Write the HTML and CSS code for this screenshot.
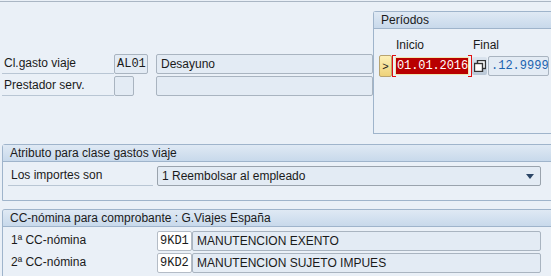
FILE: index.html
```html
<!DOCTYPE html>
<html lang="es">
<head>
  <meta charset="UTF-8">
  <title>Clase gasto viaje</title>
  <link rel="stylesheet" href="styles.css">
</head>
<body>
  <div class="topline"></div>
  <div class="top">
    <div class="left">
      <div class="row">
        <span class="label">Cl.gasto viaje</span>
        <span class="cell"><span class="field code mono">AL01</span></span>
        <span class="field text">Desayuno</span>
      </div>
      <div class="row">
        <span class="label">Prestador serv.</span>
        <span class="cell"><span class="field small"></span></span>
        <span class="field text"></span>
      </div>
    </div>
    <div class="periods">
      <div class="head">Períodos</div>
      <div class="period-body">
        <div class="cols">
          <span class="col-inicio">Inicio</span>
          <span>Final</span>
        </div>
        <div class="period-row">
          <span class="btn-more">&gt;</span>
          <span class="err">
            <span class="err-field mono">01.01.2016</span>
          </span>
          <span class="btn-copy">
            <svg width="12" height="12" viewBox="0 0 12 12">
              <rect x="3.5" y="0.5" width="8" height="8" fill="#fff" stroke="#333" stroke-width="1.4"/>
              <rect x="0.5" y="3.5" width="8" height="8" fill="#fff" stroke="#333" stroke-width="1.4"/>
            </svg>
          </span>
          <span class="field final mono">.12.9999</span>
        </div>
      </div>
    </div>
  </div>

  <div class="group g1">
    <div class="head">Atributo para clase gastos viaje</div>
    <div class="group-body">
      <div class="row">
        <span class="label wide">Los importes son</span>
        <span class="field select">1 Reembolsar al empleado<span class="arrow"></span></span>
      </div>
    </div>
  </div>

  <div class="group g2">
    <div class="head">CC-nómina para comprobante : G.Viajes España</div>
    <div class="group-body">
      <div class="row">
        <span class="label wide plain">1ª CC-nómina</span>
        <span class="field input mono">9KD1</span>
        <span class="field long">MANUTENCION EXENTO</span>
      </div>
      <div class="row">
        <span class="label wide plain">2ª CC-nómina</span>
        <span class="field input mono">9KD2</span>
        <span class="field long">MANUTENCION SUJETO IMPUES</span>
      </div>
    </div>
  </div>
</body>
</html>
```

FILE: styles.css
```css
body {
  margin: 0;
  background: #eaf0f7;
  font-family: "Liberation Sans", Arial, sans-serif;
  font-size: 12px;
  color: #1a1a1a;
  overflow: hidden;
  height: 276px;
}

.mono {
  font-family: "Liberation Mono", "Courier New", monospace;
}

.topline {
  height: 1px;
  margin-top: 1px;
  background: #aab6c4;
}

.top {
  display: flex;
  height: 132px;
}

.left {
  width: 372px;
  padding-top: 52px;
  padding-left: 2px;
}

.row {
  display: flex;
  height: 20px;
  margin-bottom: 2px;
}

.label {
  width: 110px;
  padding-left: 2px;
  line-height: 19px;
  border-bottom: 1px solid #b9c6d4;
  height: 19px;
}

.cell {
  display: flex;
  width: 42px;
}

.field {
  display: block;
  box-sizing: border-box;
  height: 20px;
  line-height: 18px;
  border: 1px solid #a9b4c0;
  background: #e3ebf4;
  border-radius: 2px;
  padding: 0 4px;
  white-space: nowrap;
  overflow: hidden;
}

.code {
  width: 34px;
  padding: 0 2px;
}

.small {
  width: 20px;
}

.text {
  width: 217px;
}

.periods {
  width: 190px;
  margin-top: 9px;
  border: 1px solid #9fb4cb;
  border-right: none;
  border-radius: 3px 0 0 0;
}

.head {
  height: 16px;
  line-height: 16px;
  padding-left: 7px;
  border-bottom: 1px solid #9fb4cb;
  background: linear-gradient(#dfe9f4, #c8d9eb);
  white-space: nowrap;
}

.period-body {
  padding: 7px 0 0 5px;
}

.cols {
  display: flex;
  height: 18px;
  line-height: 18px;
}

.col-inicio {
  width: 77px;
  padding-left: 17px;
}

.period-row {
  display: flex;
  margin-top: 1px;
  height: 22px;
}

.btn-more {
  box-sizing: border-box;
  width: 13px;
  height: 22px;
  line-height: 20px;
  text-align: center;
  border: 1px solid #b9a470;
  border-radius: 2px;
  background: linear-gradient(#fdf0b8, #eed27a);
  font-size: 11px;
}

.err {
  position: relative;
  box-sizing: border-box;
  width: 80px;
  height: 22px;
  padding: 2px 3px;
}

.err::before,
.err::after {
  content: "";
  position: absolute;
  top: 0;
  bottom: 0;
  width: 3px;
  border: 1px solid #e01010;
}

.err::before {
  left: 0;
  border-right: none;
}

.err::after {
  right: 0;
  border-left: none;
}

.err-field {
  display: block;
  box-sizing: border-box;
  height: 18px;
  line-height: 16px;
  border: 1px solid #efe7b0;
  background: #b80000;
  color: #fff;
  padding-left: 1px;
  letter-spacing: -0.1px;
}

.btn-copy {
  box-sizing: border-box;
  width: 15px;
  height: 18px;
  margin-top: 2px;
  padding: 3px 0 0 2px;
  background: linear-gradient(#dce5ef, #b9c7d6);
  border-radius: 2px;
}

.final {
  width: 61px;
  margin-left: 1px;
  margin-top: 1px;
  padding: 0 0 0 2px;
  color: #1c63b0;
}

.group {
  margin-left: 2px;
  width: 560px;
  border: 1px solid #9fb4cb;
  border-radius: 3px 0 0 0;
}

.g1 {
  margin-top: 10px;
  height: 55px;
}

.g2 {
  margin-top: 8px;
  height: 67px;
  border-bottom: none;
  overflow: hidden;
}

.group-body {
  padding: 4px 0 0 5px;
}

.label.wide {
  width: 142px;
  padding-left: 3px;
}

.label.plain {
  border-bottom-color: transparent;
}

.select {
  position: relative;
  width: 384px;
  margin-left: 4px;
  border-color: #9aa3ad;
}

.arrow {
  position: absolute;
  right: 6px;
  top: 7px;
  border-left: 4px solid transparent;
  border-right: 4px solid transparent;
  border-top: 5px solid #2b4566;
}

.input {
  width: 35px;
  margin-left: 4px;
  padding: 0 2px;
  background: #fff;
  border-color: #b4bcc6;
}

.long {
  width: 349px;
}
```
